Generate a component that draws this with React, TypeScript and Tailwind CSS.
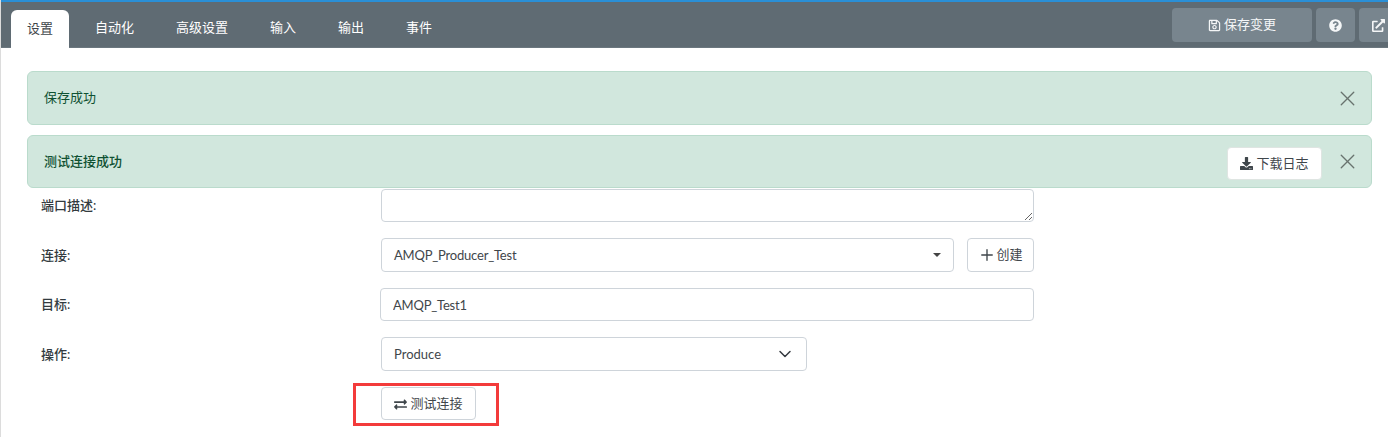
import React from 'react';
import { FaDownload, FaExchangeAlt, FaExternalLinkAlt, FaQuestionCircle, FaRegSave } from 'react-icons/fa';
import { ChevronDown, Plus, X } from 'lucide-react';

const tabs = ['设置', '自动化', '高级设置', '输入', '输出', '事件'];

const Alert = ({ text, bold, height, children }: { text: string; bold?: boolean; height: string; children?: React.ReactNode }) => (
  <div className={`flex ${height} items-center rounded-md border border-[#badbcc] bg-[#d1e7dd] pl-4 pr-[11px] text-[#0f5132]`}>
    <span className={bold ? 'font-medium' : ''}>{text}</span>
    <div className="ml-auto flex items-center gap-[13px]">
      {children}
      <X className="h-[25px] w-[25px] text-[#68736e]" strokeWidth={1.3} />
    </div>
  </div>
);

const Label = ({ text }: { text: string }) => (
  <label className="w-[340px] shrink-0 pt-px font-medium text-[#333b40]">{text}</label>
);

export default function App() {
  return (
    <div className="relative h-[437px] w-[1388px] overflow-hidden border-l border-[#dcdcdc] bg-white text-[13px] font-['Lato','Noto_Sans_CJK_SC',sans-serif] text-[#3f464b]">
      <div className="absolute left-[-1px] top-[67px] h-[33px] w-px bg-[#5f6b73]" />

      {/* Header */}
      <header className="-ml-px flex h-[48px] items-stretch border-t-2 border-b border-t-[#2a8fd6] border-b-[#6b777f] bg-[#5f6b73]">
        <nav className="flex items-end gap-2.5 pl-[11px]">
          {tabs.map((tab, index) => (
            <div
              key={tab}
              className={
                index === 0
                  ? '-mb-px flex h-[38px] items-center rounded-t-md bg-white px-4 text-[#3f464b]'
                  : 'flex h-[38px] items-center px-4 text-white'
              }
            >
              {tab}
            </div>
          ))}
        </nav>
        <div className="ml-auto flex w-[216px] shrink-0 gap-1 overflow-hidden pt-[6px] text-[#f4f6f7]">
          <button className="flex h-[34px] w-[140px] shrink-0 items-center justify-center gap-[3px] rounded bg-[#78858e]">
            <FaRegSave className="h-[13px] w-[13px]" />
            保存变更
          </button>
          <button className="flex h-[34px] w-[39px] shrink-0 items-center justify-center rounded bg-[#78858e]">
            <FaQuestionCircle className="h-[13px] w-[13px]" />
          </button>
          <button className="flex h-[34px] w-[39px] shrink-0 items-center justify-center rounded bg-[#78858e]">
            <FaExternalLinkAlt className="h-[13px] w-[13px]" />
          </button>
        </div>
      </header>

      {/* Alerts */}
      <div className="ml-[26px] mr-[16px] mt-[23px] flex flex-col gap-[10px]">
        <Alert text="保存成功" height="h-[54px]" />
        <Alert text="测试连接成功" bold height="h-[53px]">
          <button className="mt-[3px] flex h-[33px] w-[95px] items-center justify-center gap-[3px] rounded border border-[#dfe5e2] bg-white pt-px text-[#3f464b]">
            <FaDownload className="h-[13px] w-[13px]" />
            下载日志
          </button>
        </Alert>
      </div>

      {/* Form */}
      <form className="ml-[40px] w-[993px]">
        <div className="mt-px flex h-[33px] items-center">
          <Label text="端口描述:" />
          <textarea className="h-[33px] w-[653px] rounded border border-[#ced4da] bg-white" />
        </div>
        <div className="mt-[16px] flex h-[34px] items-center">
          <Label text="连接:" />
          <div className="flex h-[34px] w-[573px] items-center rounded border border-[#ced4da] pl-3 pr-3">
            <span className="pt-px tracking-[-0.2px]">AMQP_Producer_Test</span>
            <span className="ml-auto h-0 w-0 border-x-[4px] border-t-[4px] border-x-transparent border-t-[#444]" />
          </div>
          <button type="button" className="ml-[13px] flex h-[34px] w-[67px] items-center justify-center rounded border border-[#ced4da]">
            <Plus className="h-[18px] w-[18px]" strokeWidth={1.8} />
            创建
          </button>
        </div>
        <div className="mt-[16px] flex h-[33px] items-center">
          <label className="w-[339px] shrink-0 pt-px font-medium text-[#333b40]">目标:</label>
          <input
            readOnly
            value="AMQP_Test1"
            className="h-[33px] w-[654px] rounded border border-[#ced4da] px-3 tracking-[-0.2px] text-[#3f464b] outline-none"
          />
        </div>
        <div className="mt-[16px] flex h-[34px] items-center">
          <Label text="操作:" />
          <div className="flex h-[34px] w-[426px] items-center justify-between rounded border border-[#ced4da] pl-3 pr-[11px]">
            <span className="pt-px">Produce</span>
            <ChevronDown className="h-5 w-5 text-[#343a40]" strokeWidth={1.8} />
          </div>
        </div>
        <div className="ml-[340px] mt-[16px]">
          <div className="relative w-[95px]">
            <button type="button" className="flex h-[33px] w-[95px] items-center justify-center gap-[3px] rounded border border-[#ced4da] pt-px">
              <FaExchangeAlt className="h-[13px] w-[13px]" />
              测试连接
            </button>
            <div className="absolute left-[-28px] top-[-4px] h-[43px] w-[146px] border-[3px] border-[#f33b3b]" />
          </div>
        </div>
      </form>
    </div>
  );
}
